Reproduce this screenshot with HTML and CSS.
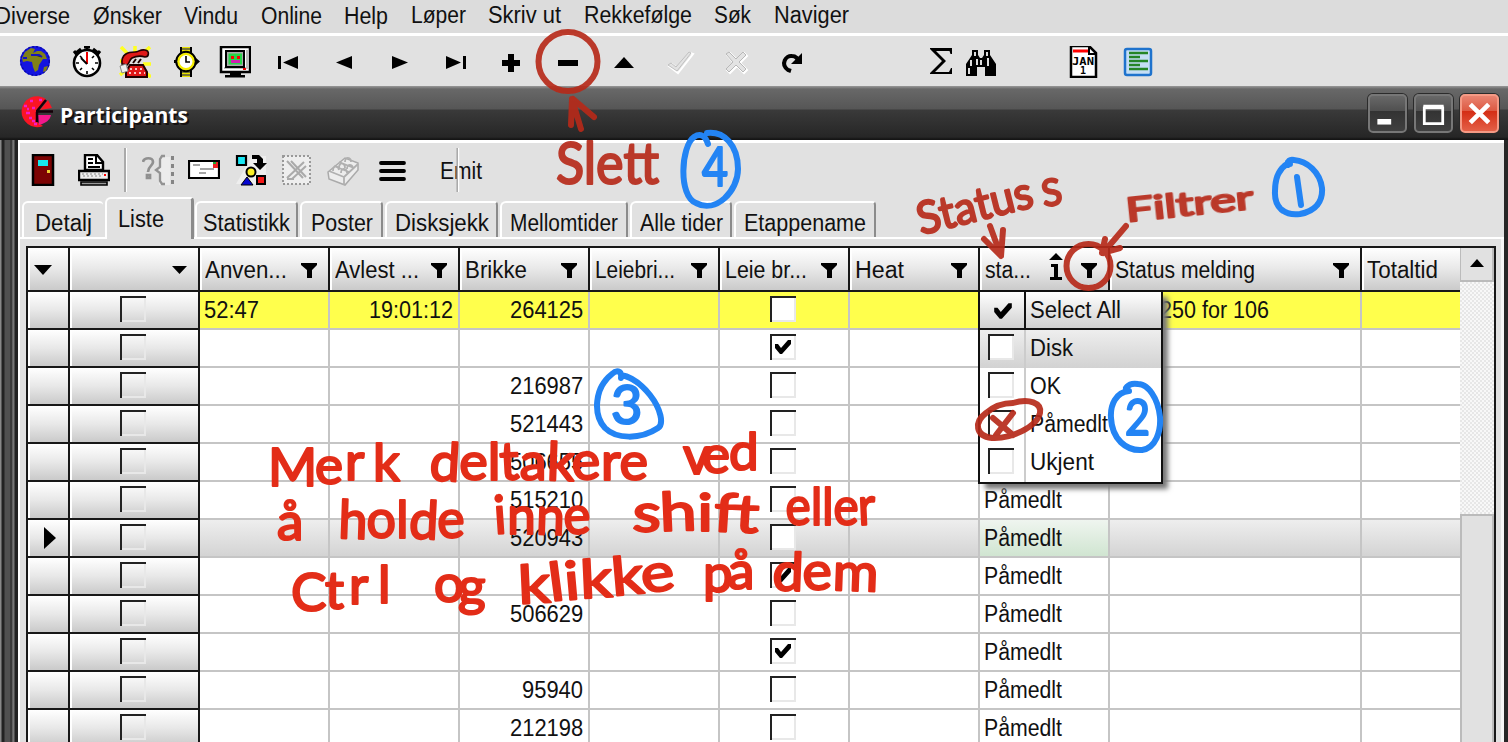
FILE: index.html
```html
<!DOCTYPE html>
<html lang="no">
<head>
<meta charset="utf-8">
<title>Participants</title>
<link rel="stylesheet" href="styles.css">
</head>
<body>
<div class="app">
  <nav class="menu">
    <span data-w="75">Diverse</span><span data-w="69">Ønsker</span><span data-w="54">Vindu</span><span data-w="61">Online</span><span data-w="44">Help</span><span class="up" data-w="55">Løper</span><span class="up" data-w="73">Skriv ut</span><span class="up" data-w="108">Rekkefølge</span><span class="up" data-w="37">Søk</span><span class="up" data-w="75">Naviger</span>
  </nav>

  <div class="main-tools">
    <svg viewBox="0 0 32 32"><circle cx="16" cy="15" r="15" fill="#1414e0"/><circle cx="16" cy="15" r="14.3" fill="none" stroke="#0a0aa8" stroke-width="1.5" stroke-dasharray="2 2"/><path d="M6 6l6-4 4 1-2 4 4-2 4 0 4 3 2 5-4 0-2 3-2 3-1 5-3 2-2-5-1-5-5-1-4 1-1-4zM8 3h5M25 21l4-1-2 5-3 1zM20 2l4 2" fill="#808018"/><path d="M12 9h8l3 2M4 12h4" stroke="#1414c0" stroke-width="2"/></svg>
    <svg viewBox="0 0 32 32" fill="none" stroke="#000" stroke-width="2"><path d="M13 1h6M16 1v4M5 7l5-4M27 7l-5-4M3 5l4 5M29 5l-4 5" stroke-width="3"/><circle cx="16" cy="17" r="13" fill="#fff" stroke-width="2.6"/><path d="M16 7v3M16 25v3M5 17h3M24 17h3M9 10l2 2M23 10l-2 2M9 24l2-2M23 24l-2-2" stroke-width="1.6"/><path d="M16 6v12" stroke="#e00"/><path d="M10 12l6 6"/></svg>
    <svg viewBox="0 0 32 32"><path d="M2 1l7 7M31 1l-8 7M16 0v8M24 18h8M27 27l5 4M1 29l5-4M1 15h6" stroke="#ffff20" stroke-width="3.500"/><path d="M3 18c-1-10 6-12 13-12 4 0 5-3 10-2 5 1 4 7 0 7-6-2-9-1-13 1-3 2-2 5-5 7z" fill="#e01818" stroke="#200" stroke-width="1.6"/><path d="M11 19h13l4 7v5H7v-6z" fill="#e01818" stroke="#200" stroke-width="2"/><path d="M11 23h13M10 27h16" stroke="#fff" stroke-width="1.6" stroke-dasharray="2 3"/><path d="M1 20l6-2 2 7-6 2z" fill="#eee" stroke="#888"/><path d="M14 17l3-4M19 17l3-4" stroke="#200" stroke-width="2"/></svg>
    <svg viewBox="0 0 32 32"><path d="M11 1v7M21 1v7M11 23v8M21 23v8" stroke="#000" stroke-width="2"/><path d="M12 1h8v6h-8zM12 24h8v7h-8z" fill="#e8e000"/><path d="M12 3h8M12 29h8M12 26h8" stroke="#554" stroke-width="1.5"/><circle cx="16" cy="15.5" r="9.5" fill="#fff" stroke="#000" stroke-width="2.5"/><circle cx="16" cy="15.5" r="7.6" fill="none" stroke="#f5ed00" stroke-width="2.2"/><path d="M16 10v6h4" fill="none" stroke="#000" stroke-width="1.6"/><path d="M26 12l4 3.500-4 3.500zM4 14h3v3H4z"/></svg>
    <svg viewBox="0 0 32 32"><path d="M2 1h29v25H2z" fill="#fff" stroke="#000" stroke-width="2.5"/><path d="M5 22h23V4" fill="none" stroke="#bbb" stroke-width="2"/><path d="M7 5h18v16H7z" fill="#aaa" stroke="#000" stroke-width="2"/><path d="M9.500 7.500h13.500v11H9.500z" fill="#26d548"/><path d="M12 10h3v3h-3zM18 10h3v3h-3z" fill="#f00"/><path d="M12 14h9v3h-9z" fill="#d020b0"/><path d="M24 22h3v2h-3z" fill="#e00"/><path d="M11 27h11v2h4v2.500H6V29h5z"/></svg>
    <svg viewBox="0 0 32 32"><path d="M6 10h3v13H6zM26 10v13l-15-6.500z"/></svg>
    <svg viewBox="0 0 32 32"><path d="M24 10v13L8 16.500z"/></svg>
    <svg viewBox="0 0 32 32"><path d="M9 10v13l16-6.500z"/></svg>
    <svg viewBox="0 0 32 32"><path d="M6 10v13l15-6.500zM23 10h3v13h-3z"/></svg>
    <svg viewBox="0 0 32 32"><path d="M13 8h6v6h6v6h-6v6h-6v-6H7v-6h6z"/></svg>
    <svg viewBox="0 0 32 32"><path d="M6 14h20v6H6z"/></svg>
    <svg viewBox="0 0 32 32"><path d="M6 22L16 11l10 11z"/></svg>
    <svg viewBox="0 0 32 32"><path d="M5 19l3-2 5 4L26 6l3 1-15 19z" fill="#e3e3e3" stroke="#fff" stroke-width="2" transform="translate(1 1)"/><path d="M5 19l3-2 5 4L26 6l2 1-14 18z" fill="#e3e3e3" stroke="#c0c0c0"/></svg>
    <svg viewBox="0 0 32 32"><path d="M6 8l3-2 7 7 7-7 3 3-7 7 7 7-3 3-7-7-7 7-3-3 7-7z" fill="#e3e3e3" stroke="#fff" stroke-width="2" transform="translate(1 1)"/><path d="M6 8l3-2 7 7 7-7 3 3-7 7 7 7-3 3-7-7-7 7-3-3 7-7z" fill="#e3e3e3" stroke="#b8b8b8"/></svg>
    <svg viewBox="0 0 32 32"><path d="M15 25l-3-1c-8-6-2-15 4-14 4 0 6 3 6 5" fill="none" stroke="#000" stroke-width="4"/><path d="M26 7v11H15z"/></svg>
    <svg viewBox="0 0 32 32"><path d="M5 2h22v6h-1.500l-1-3H11l10 10L10 26h14l2-4h1v6H5v-1l12-12L5 3z"/></svg>
    <svg viewBox="0 0 32 32"><path d="M7 4h6v5l2 3h2l2-3V4h6v5l6 9v12H20v-9h-8v9H1V18l6-9z"/><path d="M9 6h2v4H9zM21 6h2v4h-2zM5 14h2v6H5zM15 14h2v5h-2zM3 22h2v6H3zM22 12h2v8h-2zM11 13h2v6h-2z" fill="#ddd"/></svg>
    <svg viewBox="0 0 32 32"><path d="M4 0h18l7 7v24H4z" fill="#fff" stroke="#000" stroke-width="2.500"/><path d="M22 0v8h7" fill="none" stroke="#000" stroke-width="2"/><path d="M6 5h15" stroke="#f00" stroke-width="3"/><text x="5" y="19" class="jan" textLength="22" lengthAdjust="spacingAndGlyphs">JAN</text><text x="13" y="28" class="jan">1</text></svg>
    <svg viewBox="0 0 32 32"><rect x="3" y="3" width="26" height="26" rx="2" fill="#c5def5" stroke="#1f73cd" stroke-width="2.500"/><path d="M7 7h19M7 11h11M7 15h19M7 19h11M7 23h19" stroke="#258526" stroke-width="2.300"/></svg>
  </div>

  <section class="window">
    <header class="title">
      <svg class="logo" viewBox="0 0 32 32"><path d="M25 3A15.500 15.500 0 1 0 22 30L16 26V15z" fill="#fa1524"/><path d="M3 10h3M9 5h3M5 17h4M11 12h3M8 22h3M13 28h3M6 13h2M18 4h3M11 25h3" stroke="#f51bc5" stroke-width="2.500"/><path d="M19 14l8-10 4 8z" fill="#fa1524"/><path d="M17 19h13c-1 5-5 8-12 10z" fill="#f2188c"/><path d="M16 15L25 4M15 15.500h17M16 16v10" stroke="#140008" stroke-width="2.500"/></svg>
      <b data-w="128">Participants</b>
      <div class="buttons">
        <i class="wb"><svg viewBox="0 0 38 38"><path d="M8 25h15v6H8z" fill="#fff"/></svg></i>
        <i class="wb"><svg viewBox="0 0 38 38"><path d="M9 13h20v17H9zM8 11h22" fill="none" stroke="#fff" stroke-width="3"/></svg></i>
        <i class="wb close"><svg viewBox="0 0 38 38"><path d="M9 9l20 20M29 9L9 29" stroke="#fff" stroke-width="5"/></svg></i>
      </div>
    </header>

    <div class="frame">
      <div class="rail"></div>
      <div class="client">
        <div class="tools">
          <svg viewBox="0 0 32 32"><path d="M6 1h20v30H6z" fill="#7c0404" stroke="#000" stroke-width="2.500"/><path d="M11 6h10v6H11z" fill="#17e9ed"/><path d="M20 16h3v3h-3z" fill="#ec3"/></svg>
          <svg viewBox="0 0 32 32"><path d="M7 16V1h12l6 7v8z" fill="#fff" stroke="#000" stroke-width="2.400"/><path d="M18 1v8h7M10 5h5M10 9h5M10 13h12" fill="none" stroke="#000" stroke-width="2"/><path d="M1 17h30v9H1z" fill="#eee" stroke="#000" stroke-width="2.400"/><path d="M4 20h21M5 22h20" stroke="#aaa" stroke-dasharray="2 2" stroke-width="1.500"/><path d="M26 20h2v2h-2z" fill="red"/><path d="M3 28h26v3H3z" fill="#999" stroke="#000" stroke-width="1.600"/></svg>
          <i class="sep"></i>
          <svg viewBox="0 0 32 32"><path d="M17 31V19l-4-3 4-3V3h11v28z" fill="#ececec"/><path d="M1 8c1-5 10-5 10 0 0 4-5 4-5 10M5 21h3v3H5z" fill="none" stroke="#909090" stroke-width="2.700"/><path d="M23 2h-3l-2 3v8l-4 3 4 3v8l2 3h3" fill="none" stroke="#939393" stroke-width="2.300"/><path d="M31 2v28" stroke="#858585" stroke-width="4" stroke-dasharray="4 4"/></svg>
          <svg viewBox="0 0 32 32"><path d="M1 7h30v17H1z" fill="#fff" stroke="#000" stroke-width="2.200"/><path d="M5 11h7M12 15h14M11 19h7" stroke="#888" stroke-width="1.700"/><path d="M25 8h5v6h-5z" fill="#e22"/><path d="M25 8h3v2h-3z" fill="#2a3"/></svg>
          <svg viewBox="0 0 32 32"><path d="M1 30l16-28h14v28z" fill="#eee"/><path d="M2 2h9v9H2z" fill="#19e7f4" stroke="#000" stroke-width="2.200"/><path d="M17 1h7l4 4v4h4l-7 7-7-7h4V5h-5z"/><circle cx="16" cy="18" r="4.500" fill="#fcf028" stroke="#000" stroke-width="2"/><path d="M6 31l6-8 6 8z" fill="#0505cf" stroke="#000"/><path d="M22 22h8v8h-8z" fill="#f51919" stroke="#000" stroke-width="2"/></svg>
          <svg viewBox="0 0 32 32"><path d="M3 2h27v28H3z" fill="#eee" stroke="#999" stroke-width="2" stroke-dasharray="2 2"/><path d="M7 7l16 17M11 7l15 16M24 8L7 24M26 12L12 25M7 25h7" fill="none" stroke="#aaa" stroke-width="2"/></svg>
          <svg viewBox="0 0 32 32"><path d="M1 18l17-14 13 5v7L18 31 2 25z" fill="#ededed" stroke="#aaa" stroke-width="1.500"/><path d="M2 17l15 6v8M17 23l14-13M7 12l15 6M12 8l15 6M6 17c0-6 5-6 6-1M12 14c0-7 6-5 6 0M18 8c0-6 6-5 6 0M14 19c0-6 6-5 6 0M20 15c0-6 6-5 6 0" fill="none" stroke="#b0b0b0" stroke-width="1.800"/></svg>
          <svg viewBox="0 0 32 32"><path d="M5 9h23M5 17h23M5 25h23" stroke="#000" stroke-width="3.800" stroke-linecap="round"/></svg>
          <span class="emit" data-w="42">Emit</span>
        </div>

        <div class="tabs">
          <div class="tab t1"><span data-w="57">Detalj</span></div><div class="tab active"><span data-w="46">Liste</span></div><div class="tab t3"><span data-w="87">Statistikk</span></div><div class="tab t4"><span data-w="62">Poster</span></div><div class="tab t5"><span data-w="94">Disksjekk</span></div><div class="tab t6"><span data-w="108">Mellomtider</span></div><div class="tab t7"><span data-w="83">Alle tider</span></div><div class="tab t8"><span data-w="122">Etappename</span></div>
        </div>

        <div class="page">
          <div class="table">
            <div class="grid" id="grid"></div>
            <div class="scroll"><div class="arrow"><svg viewBox="0 0 32 32"><path d="M9 19l7-8 7 8z"/></svg></div><div class="track"></div><div class="thumb"></div></div>
          </div>
        </div>
      </div>
    </div>
  </section>

  <div class="dropdown" id="dropdown"></div>

  <svg class="ink" viewBox="0 0 1508 742">
    <g class="dark">
      <circle cx="568" cy="61.500" r="29.500"/>
      <path d="M571 125l1-26 9 30M573 99l21 18M990 226l11 30M984 239l17 17 2-26M1126 226l-23 27M1105 239l-3 14 18-5"/>
      <circle cx="1088.500" cy="266" r="22"/>
      <path d="M1013 403c16-5 29 0 27 10-3 14-29 26-48 25-17-2-18-16-6-25 7-6 16-10 27-10M993 418l20 17M1013 413l-17 22"/>
      <g class="write">
        <text x="556" y="184" class="s66" textLength="103" lengthAdjust="spacingAndGlyphs">Slett</text>
        <text transform="translate(921 235) rotate(-14)" class="s46" textLength="118" lengthAdjust="spacingAndGlyphs">Status</text>
        <text transform="translate(1044 207) rotate(-10)" class="s40">S</text>
        <text transform="translate(1127 222) rotate(-6)" class="s34" textLength="128" lengthAdjust="spacingAndGlyphs">Filtrer</text>
      </g>
    </g>
    <g class="blue">
      <path d="M708 144c-3-9-8-11-14-7-13 9-16 59 2 66 20 11 42-12 42-34 0-24-14-38-31-36"/>
      <path d="M1290 164h-3c-8 5-12 14-12 27-1 17 10 25 25 23 16-3 23-13 22-26-2-16-15-27-28-28-4-1-7 1-6 5"/>
      <path d="M1129 391c-13 1-19 14-18 27 1 21 15 33 31 32 14-2 19-19 18-33-2-19-12-33-22-33-6-1-10 1-12 4"/>
      <path d="M621 378c1-8-5-8-9-4-18 14-19 41-7 54 11 11 35 12 53 0 6-4 3-19-8-33-8-10-17-18-29-20"/>
      <g class="write">
        <text x="702" y="186" class="s56" textLength="26" lengthAdjust="spacingAndGlyphs">4</text>
        <path class="one" d="M1297 177l4 28"/>
        <text x="1125" y="435" class="s48" textLength="25" lengthAdjust="spacingAndGlyphs">2</text>
        <text x="611" y="424" class="s56">3</text>
      </g>
    </g>
    <g class="red write s50">
      <text x="268 315 345 373" y="486 484 480 481">Merk</text>
      <text x="429" y="480" textLength="219" lengthAdjust="spacingAndGlyphs" rotate="3 0 0 -3 0 2 -3 0 0">deltakere</text>
      <text x="683 702 729" y="474 473 470" textLength="72">ved</text>
      <text x="277" y="540">å</text>
      <text x="338" y="538" textLength="127" lengthAdjust="spacingAndGlyphs" rotate="2 -2 0 3 -2">holde</text>
      <text x="495" y="534" textLength="96" lengthAdjust="spacingAndGlyphs" rotate="-4 0 2 -2">inne</text>
      <text x="632" y="531" textLength="126" lengthAdjust="spacingAndGlyphs" rotate="2 -2 0 3 0">shift</text>
      <text x="786" y="525" textLength="90" lengthAdjust="spacingAndGlyphs" rotate="-2 0 0 0 -3">eller</text>
      <text x="291 325 349 378" y="611 609 604 603">Ctrl</text>
      <text x="434 458" y="602 605">og</text>
      <text transform="translate(519 604) rotate(-5)" textLength="158" lengthAdjust="spacingAndGlyphs" rotate="2 -2 0 2 0 -3">klikke</text>
      <text x="703 728" y="592 589">på</text>
      <text x="772" y="590" textLength="106" lengthAdjust="spacingAndGlyphs" rotate="2 -2 2">dem</text>
    </g>
  </svg>
</div>
<script src="app.js"></script>
</body>
</html>
```
FILE: styles.css
```css
* { box-sizing: border-box; }
body { margin: 0; }
.app { position: relative; width: 1508px; height: 742px; overflow: hidden; background: #e1e1e1; color: #111; font: 23px/30px "Liberation Sans", sans-serif; white-space: nowrap; }
.app [data-w] { display: inline-block; text-align: left; transform-origin: 0 50%; }
svg { display: block; }
.menu { display: flex; gap: 22.500px; height: 36px; padding-top: 1px; background: #dcdcdc; border-bottom: 3px solid #fff; }
.menu span { flex: none; }
.menu span:first-child { margin-left: -5px; }
.menu .up { margin-top: -1px; }
.main-tools { display: grid; grid-template-columns: 52px 48px 51px 49px 53px 56px 55px 57px 55px 57px 56px 55px 57px 56px 149px 40px 102px 55px 32px; height: 50px; padding: 10px 0 0 19px; }
.main-tools svg, .tools svg { width: 32px; height: 32px; }
.jan { font: bold 10px "DejaVu Sans Mono", monospace; }

.window { height: 656px; background: #262626; display: flex; flex-direction: column; }
.title { display: flex; align-items: center; height: 54px; padding: 1px 9px 0 21px; background: linear-gradient(#999 0, #686868 3px, #565656 23px, #3a3a3a 24px, #262626 51px, #151515 53px); color: #fff; }
.logo { width: 32px; height: 32px; margin-top: -4px; }
.title b { margin-left: 7px; font: bold 22px/30px "Open Sans", sans-serif; text-shadow: 2px 2px 0 #151010; }
.buttons { display: flex; gap: 7px; margin-left: auto; }
.wb { width: 39px; height: 39px; border: 2px solid #777; border-radius: 5px; background: linear-gradient(#686868, #505050 42%, #333 43%, #404040); box-shadow: 0 0 0 1px #2b2b2b; }
.wb svg { width: 35px; height: 35px; }
.close { border-color: #f59a85; background: linear-gradient(#e98471, #dd5942 42%, #d42d14 43%, #e46047); }
.frame { flex: 1; display: flex; min-height: 0; }
.rail { width: 18px; background: linear-gradient(90deg, #888 0 1px, #222 2px 4px, #505050 5px 10px, #252525 11px, #777 13px 14px, #222 15px 18px); }
.client { display: flex; flex-direction: column; width: 1486px; background: #e1e1e1; border-top: 3px solid #fff; border-left: 2px solid #fff; }
.tools { display: grid; grid-template-columns: 51px 46px 18px 46px 47px 45px 47px 49px 65px 60px; padding: 11px 0 0 7px; height: 55px; }
.sep { width: 3px; height: 44px; margin-top: -6px; background: linear-gradient(90deg, #aaa 66%, #fff 66%); }
.emit { position: relative; margin-left: -1px; margin-top: 2px; justify-self: start; }
.emit::before { content: ""; position: absolute; left: 18px; top: -8px; width: 3px; height: 44px; background: linear-gradient(90deg, #aaa 66%, #fff 66%); }
.tabs { display: flex; align-items: flex-end; gap: 2px; height: 41px; padding-left: 2px; border-bottom: 2px solid #fff; }
.tab { height: 36px; padding-top: 5px; text-align: center; border: 2px solid #fff; border-right-color: #8b8b8b; border-bottom: 0; border-radius: 6px 4px 0 0; }
.active { width: 89px; height: 42px; margin-bottom: -2px; padding: 5px 16px 0 0; background: #e1e1e1; border-right-width: 3px; }
.t1 { width: 81px; border-right: 0; }
.t3 { width: 103px; margin-left: -1px; }
.t4 { width: 83px; }
.t5 { width: 113px; }
.t6 { width: 128px; }
.t7 { width: 102px; }
.t8 { width: 142px; }
.page { flex: 1; padding: 7px 8px 0 6px; border-right: 3px solid #f5f5f5; min-height: 0; overflow: hidden; }
.table { display: flex; height: 520px; width: 1470px; border: 2px solid #181818; border-bottom: 0; }
.grid { width: 1432px; }
.row { display: grid; grid-template-columns: 42px repeat(8, 130px) 252px 98px; height: 38px; background: #fff; }
.row > div { position: relative; border: solid #c5c5c5; border-width: 0 2px 2px 0; padding: 3px 4px; }
.row > div.num { text-align: right; padding-right: 5px; }
.row > div:last-child { border-right-width: 0; }
.row > div.fixed, .head > div { background: linear-gradient(#fff, #e8e8e8 50%, #cacaca); border-color: #181818; box-shadow: inset 2px 0 #fff; }
.head.row { height: 44px; }
.head > div { display: flex; justify-content: space-between; align-items: center; padding: 1px 9px 0 5px; }
.head svg { width: 20px; height: 20px; flex: none; }
.head .sort { margin-left: 2px; width: 18px; height: 30px; margin-top: -8px; }
.row.yellow { background: #ffff4c; }
.row.selected { background: linear-gradient(#eee, #d2d2d2); }
.green { background: linear-gradient(#eff5ef, #d0e5d1); }
.check { display: block; width: 26px; height: 26px; margin: 1px 0 0 46px; background: #fff; border: solid #222; border-width: 2px 0 0 2px; box-shadow: inset -2px -2px #e8e8e8; }
.fixed .check { background: transparent; }
.check svg { width: 20px; height: 20px; margin: 1px; }
.pointer { width: 12px; height: 24px; margin: 3px 0 0 12px; }
.scroll { display: flex; flex-direction: column; width: 34px; }
.arrow { height: 34px; border: 2px solid #bbb; border-width: 0 2px 2px 1px; background: #e1e1e1; }
.arrow svg { width: 32px; height: 32px; }
.track { height: 232px; background: repeating-conic-gradient(#e7e7e7 0 25%, #f8f8f8 0 50%) 0 0 / 4px 4px; }
.thumb { flex: 1; background: #e1e1e1; border: 2px solid #bbb; }

.dropdown { position: absolute; left: 978px; top: 290px; width: 185px; height: 194px; border: 2px solid #111; background: #fff; box-shadow: 6px 6px 5px -1px #777; }
.option { display: grid; grid-template-columns: 46px 1fr; height: 38px; }
.option > div { padding: 3px 4px; }
.option > div:first-child { border-right: 2px solid #ccc; }
.option .check { margin: 1px 0 0 4px; }
.option.all { border-bottom: 2px solid #111; background: linear-gradient(#fff, #d0d0d0); }
.option.all > div:first-child { border-color: #111; }
.option.all svg { width: 22px; height: 22px; margin: 5px 0 0 8px; }
.option.hot { background: linear-gradient(#eee, #d2d2d2); }

.ink { position: absolute; left: 0; top: 0; width: 1508px; height: 742px; fill: none; stroke-width: 6; stroke-linecap: round; stroke-linejoin: round; }
.dark { stroke: #b72a1a; opacity: .92; }
.blue { stroke: #2384f4; }
.red { stroke: #e32d18; }
.write { font-family: Lato, "Open Sans", sans-serif; stroke-width: 2.200; }
.dark .write { fill: #b72a1a; }
.blue .write { fill: #2384f4; }
.red.write { fill: #e32d18; }
.one { stroke-width: 6; }
.s66 { font-size: 59px; }
.s56 { font-size: 54px; }
.s50 { font-size: 53px; }
.s48 { font-size: 50px; }
.s46 { font-size: 45px; }
.s40 { font-size: 37px; }
.s34 { font-size: 33px; }
```
FILE: app.js
```js
const label = (text, w) => text ? `<span data-w="${w}">${text}</span>` : '';
const tick = '<svg viewBox="0 0 20 20"><path d="M2 7l3 0 3 4 7-8h3v4L9 17H7L2 11z"/></svg>';
const check = on => `<i class="check">${on ? tick : ''}</i>`;
const funnel = '<svg viewBox="0 0 20 20"><path d="M2 3h16v2l-5 5v8H8v-8L2 5z"/></svg>';
const down = '<svg viewBox="0 0 20 20"><path d="M1 5h18l-9 10z"/></svg>';
const smallDown = '<svg viewBox="0 0 20 20"><path d="M3 6h15l-7.500 8z"/></svg>';
const sort = '<svg class="sort" viewBox="0 0 18 30"><path d="M9 2l7 7H2zM4 13h7v13h4v3H3v-3h4V16H4z"/></svg>';

const heads = [['Anven...', 82], ['Avlest ...', 84], ['Brikke', 62], ['Leiebri...', 80], ['Leie br...', 82], ['Heat', 49]];
let html = `<div class="row head"><div>${down}</div><div><span></span>${smallDown}</div>`;
html += heads.map(([t, w]) => `<div>${label(t, w)}${funnel}</div>`).join('');
html += `<div>${label('sta...', 46)}${sort}${funnel}</div><div>${label('Status melding', 140)}${funnel}</div><div>${label('Totaltid', 71)}</div></div>`;

const numbers = ['264125', '', '216987', '521443', '506655', '515210', '520943', '', '506629', '', '95940', '212198'];
numbers.forEach((n, i) => {
  const first = i === 0;
  const pointer = i === 6 ? '<svg class="pointer" viewBox="0 0 12 24"><path d="M0 1v22l12-11z"/></svg>' : '';
  html += `<div class="row ${first ? 'yellow' : ''} ${i === 6 ? 'selected' : ''}">
    <div class="fixed">${pointer}</div><div class="fixed">${check(false)}</div>
    <div>${first ? label('52:47', 55) : ''}</div><div class="num">${first ? label('19:01:12', 84) : ''}</div>
    <div class="num">${label(n, n.length * 12.2)}</div><div></div>
    <div>${check([1, 7, 9].includes(i))}</div><div></div>
    <div class="${i === 6 ? 'green' : ''}">${i > 4 ? label('Påmedlt', 78) : ''}</div>
    <div>${first ? '<span style="margin-left:46px"></span>' + label('250 for 106', 109) : ''}</div><div></div></div>`;
});
document.getElementById('grid').innerHTML = html;

document.getElementById('dropdown').innerHTML =
  `<div class="option all"><div>${tick}</div><div>${label('Select All', 91)}</div></div>` +
  [['Disk', 43], ['OK', 31], ['Påmedlt', 78], ['Ukjent', 64]]
    .map(([t, w], i) => `<div class="option ${i ? '' : 'hot'}"><div>${check(false)}</div><div>${label(t, w)}</div></div>`).join('');

// Condenses each label to its set width.
document.querySelectorAll('[data-w]').forEach(el => {
  const natural = el.getBoundingClientRect().width;
  el.style.width = el.dataset.w + 'px';
  el.style.transform = `scaleX(${el.dataset.w / natural})`;
});
```
